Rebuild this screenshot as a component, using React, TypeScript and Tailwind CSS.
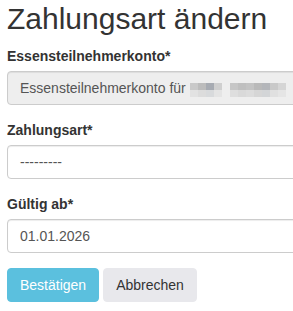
import React from 'react';

const topRow1 = ['#c9c9c9', '#bcbcbc', '#a7abb2', '#cfcfcf'];
const bottomRow1 = ['#e2e2e2', '#dcdcdc', '#d8dadc', '#e4e4e4'];
const topRow2 = ['#c6c6c6', '#bfbfbf', '#c3c3c3', '#b9b9b9', '#b4b6ba', '#c9c9c9', '#d5d5d5'];
const bottomRow2 = ['#dedede', '#d9d9d9', '#dcdcdc', '#d6d6d6', '#d3d5d7', '#e0e0e0', '#e5e5e5'];

// blurred name, drawn as a small pixel mosaic
const Mosaic: React.FC<{ top: string[]; bottom: string[] }> = ({ top, bottom }) => (
  <div className="flex flex-col">
    <div className="flex">
      {top.map((c, i) => (
        <span key={i} className="block w-[8px] h-[7px]" style={{ backgroundColor: c }} />
      ))}
    </div>
    <div className="flex">
      {bottom.map((c, i) => (
        <span key={i} className="block w-[8px] h-[7px]" style={{ backgroundColor: c }} />
      ))}
    </div>
  </div>
);

const inputBase =
  'w-[330px] h-[34px] px-3 flex items-center border border-[#ccc] rounded-[4px] shadow-[inset_0_1px_1px_rgba(0,0,0,0.075)] text-[14px] text-[#555]';

const App: React.FC = () => {
  return (
    <div className="min-h-screen overflow-hidden bg-white px-[7px] pt-[2px] font-['Liberation_Sans',Arial,sans-serif] text-[14px] leading-5 text-[#333]">
      <h1 className="text-[30px] leading-[33px] font-normal mb-[11px] whitespace-nowrap">Zahlungsart ändern</h1>

      <div className="mb-[15px]">
        <label className="block font-bold mb-[5px]">Essensteilnehmerkonto*</label>
        <div className={`${inputBase} bg-[#eee]`}>
          <span className="whitespace-nowrap">Essensteilnehmerkonto für</span>
          <div className="flex gap-[8px] ml-[4px] mt-[3px]">
            <Mosaic top={topRow1} bottom={bottomRow1} />
            <Mosaic top={topRow2} bottom={bottomRow2} />
          </div>
        </div>
      </div>

      <div className="mb-[15px]">
        <label className="block font-bold mb-[5px]">Zahlungsart*</label>
        <div className={`${inputBase} bg-white`}>
          <span>---------</span>
        </div>
      </div>

      <div className="mb-[15px]">
        <label className="block font-bold mb-[5px]">Gültig ab*</label>
        <div className={`${inputBase} bg-white`}>
          <span>01.01.2026</span>
        </div>
      </div>

      <div className="flex gap-[4px]">
        <button
          type="button"
          className="h-[34px] px-3 rounded-[4px] border border-[#5bc0de] bg-[#5bc0de] text-white text-[14px]"
        >
          Bestätigen
        </button>
        <button
          type="button"
          className="h-[34px] px-3 rounded-[4px] border border-[#e8e8ec] bg-[#e8e8ec] text-[#333] text-[14px]"
        >
          Abbrechen
        </button>
      </div>
    </div>
  );
};

export default App;
